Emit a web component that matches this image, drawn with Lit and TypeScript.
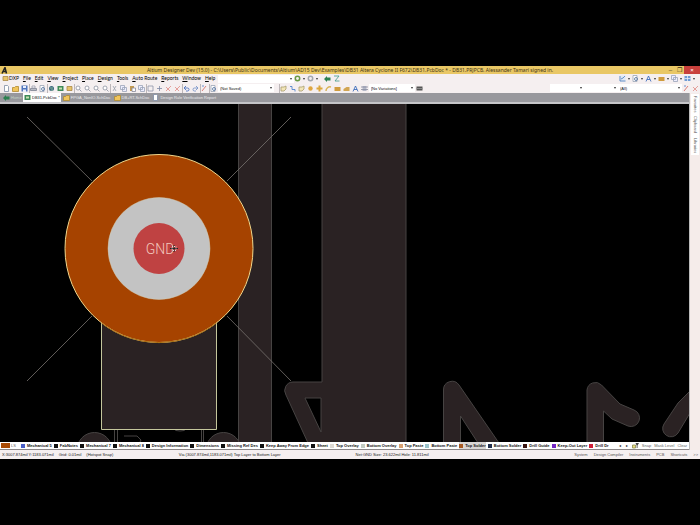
import { LitElement, html, svg, css } from "lit";
import { customElement, property } from "lit/decorators.js";

const glyphs: Record<string, unknown> = {
  page: svg`<path d="M1.500 .5h3l1 1v5h-4z" fill="#fff" stroke="#7d8ba5"/>`,
  folder: svg`<path d="M.5 6.500v-4h2l1-1h3v5z" fill="#f0c45c" stroke="#b08a30"/>`,
  save: svg`<path d="M.5 .5h6v6h-6z" fill="#4f74bd"/><path d="M2 1h3v2H2zM2 4.500h3V7H2z" fill="#e8eefb"/>`,
  print: svg`<path d="M.5 3.500h6v2h-6z" fill="#b9bcc6" stroke="#7c8290"/><path d="M2 1h3v2H2z" fill="#fff" stroke="#99a"/>`,
  find: svg`<path d="M1 .5h4v6H1z" fill="#fff" stroke="#9aa4b5"/><circle cx="4" cy="4" r="1.500" fill="none" stroke="#4a6b9b"/>`,
  globe: svg`<circle cx="3.500" cy="3.500" r="2.500" fill="#3d6780"/><path d="M2 3h3M3 5h2" stroke="#9fd0a0"/>`,
  board: svg`<path d="M.5 1h6v5h-6z" fill="#3e8a58"/><path d="M2 2.500h3v2H2z" fill="#c8e0b0"/>`,
  box: svg`<path d="M1 1.500h5v4H1z" fill="#e8c46a" stroke="#aa8844"/>`,
  zoom: svg`<circle cx="3" cy="3" r="2" fill="#fff" stroke="#8b90a0"/><path d="M4.500 4.500L6.500 6.500" stroke="#8b90a0"/>`,
  cut: svg`<path d="M2 1l3 5M5 1L2 6" stroke="#999fab"/>`,
  copy: svg`<path d="M.5 .5h4v4h-4zM2.500 2.500h4v4h-4z" fill="#eef" stroke="#9aa3b8"/>`,
  paste: svg`<path d="M1 1h4v5H1z" fill="#c39a50"/><path d="M3 3h3.500v3.500H3z" fill="#fff" stroke="#889"/>`,
  area: svg`<path d="M1 1h5v5H1z" fill="none" stroke="#8d94a8"/>`,
  move: svg`<path d="M3.500 1v5M1 3.500h5" stroke="#7d88a5"/>`,
  red: svg`<path d="M1 6L6 1M1 2l4 4" stroke="#e08a84"/>`,
  undo: svg`<path d="M1.500 3h3a1.500 1.500 0 0 1 0 3H3M3 1L1 3l2 2" fill="none" stroke="#3b67bd"/>`,
  redo: svg`<path d="M5.500 3h-3a1.500 1.500 0 0 0 0 3H4M4 1l2 2-2 2" fill="none" stroke="#6b8ac4"/>`,
  pen: svg`<path d="M1 6l4-5" stroke="#d0625c"/><path d="M1 1h2" stroke="#4a78c8"/>`,
  blue: svg`<path d="M1 1.500h2v3h3v2" fill="none" stroke="#3f78c9"/>`,
  route: svg`<path d="M1 6V2h3l2-1v3L4 6z" fill="#f3e6b8" stroke="#a8a070"/>`,
  dot: svg`<circle cx="3.500" cy="3.500" r="2.200" fill="#dfa640"/>`,
  star: svg`<path d="M3.500 .5v6M.5 3.500h6" stroke="#dba63c" stroke-width="2"/>`,
  arc: svg`<path d="M1 6a4 4 0 0 1 5-4" fill="none" stroke="#d8b45c" stroke-width="1.500"/>`,
  fill: svg`<path d="M.5 2h6v4h-6z" fill="#d09c3e"/>`,
  poly: svg`<path d="M.5 6V4l3-2h3v4z" fill="#d2a552"/>`,
  letter: svg`<path d="M1 6.500L3.500 1 6 6.500M2 4.500h3" fill="none" stroke="#2d62b8"/>`,
  part: svg`<path d="M1.500 1h4v5h-4z" fill="#b5b8c8"/><path d="M0 2h7M0 4.500h7" stroke="#888ca0"/>`,
  chart: svg`<path d="M.5 .5h6v6h-6z" fill="#dfe9f7"/><path d="M1 1v5h5.500M2 4l2-1 2-2" fill="none" stroke="#4778ba"/>`,
  cells: svg`<path d="M.5 1h6v5h-6z" fill="#6f9bd4"/><path d="M.5 3.500h6M3.500 1v5" stroke="#e6eefa"/>`,
  chip: svg`<path d="M.5 1.500h6v4h-6z" fill="#555"/><path d="M0 3.500h7" stroke="#999"/>`,
  back: svg`<circle cx="3.500" cy="3.500" r="2.200" fill="none" stroke="#6a9a45" stroke-width="1.500"/>`,
  fwd: svg`<circle cx="3.500" cy="3.500" r="2.200" fill="none" stroke="#a3a8ae" stroke-width="1.500"/>`,
  home: svg`<path d="M0 4l3-3v1.500h3.500v3H3V7z" fill="#2c8050"/>`,
  graph: svg`<path d="M1 1h5L2 6h4.500" fill="none" stroke="#3f9a88"/>`,
  cfg: svg`<path d="M.5 3h3v3h-3z" fill="#e8dd80" stroke="#8a8a50"/><path d="M3.500 1h3.500L5.500 3.500V6h-.8V3.500z" fill="#444"/>`,
};

@customElement("tool-icon")
class ToolIcon extends LitElement {
  @property() name = "page";
  static styles = css`
    :host { display: block; width: 7px; height: 7px; flex: none; }
    svg { display: block; width: 7px; height: 7px; }
  `;
  render() {
    return html`<svg viewBox="0 0 7 7" aria-hidden="true" stroke-width=".8">${glyphs[this.name]}</svg>`;
  }
}

@customElement("app-root")
class AppRoot extends LitElement {
  static styles = css`
    :host {
      display: flex; flex-direction: column; box-sizing: border-box; min-height: 100vh;
      padding: 66px 0; background: #000; color: #111;
      font: 4px/8px "Liberation Sans", sans-serif;
    }
    button, select { font: inherit; color: inherit; background: none; border: 0; padding: 0; margin: 0; }
    .title { display: flex; align-items: center; height: 8px; background: #e9c765; color: #3f3415; }
    .title h1 { flex: 1; margin: 0; text-align: center; white-space: nowrap; font: 5px/8px "Noto Sans", sans-serif; }
    .app { width: 34px; }
    .logo { display: block; width: 9px; height: 7px; }
    .win { display: flex; }
    .win button { width: 9px; height: 8px; font-size: 6px; line-height: 7px; }
    .win .close { width: 16px; background: #c8403c; color: #fff; }
    .bar { display: flex; align-items: center; background: #f5eff0; white-space: nowrap; }
    .menubar { height: 9px; }
    .menu { display: flex; align-items: center; gap: 4px; padding-left: 2px; width: 218px; box-sizing: border-box; font: 5px/9px Lato, sans-serif; color: #000; }
    .menu button::first-letter { text-decoration: underline; }
    .menu .brand { display: flex; align-items: center; }
    .tools { height: 10px; }
    .set { display: flex; align-items: center; }
    .set button { display: block; width: 9px; padding: 1px; box-sizing: border-box; }
    .set .cut { border-left: 1px solid #bcb6b8; padding-left: 0; }
    .lead { padding-left: 2px; }
    .drops { display: flex; padding-right: 4px; gap: 1px; }
    .drops button { display: flex; align-items: center; gap: 2px; width: 12px; padding: 1px 0; }
    .caret { width: 0; height: 0; border: 1px solid transparent; border-top: 2px solid #333; border-bottom: 0; flex: none; }
    .push { margin-left: auto; }
    .combo { display: flex; align-items: center; background: #fff; height: 8px; padding: 0 2px; box-sizing: border-box; }
    .combo select { flex: 1; min-width: 0; width: 100%; appearance: none; outline: 0; line-height: 7px; }
    .wide { width: 76px; }
    .mid { width: 56px; }
    .short { width: 46px; }
    .long { width: 64px; }
    .small { width: 34px; }
    .gap { margin-left: 5px; }
    .body { flex: 1; display: flex; min-height: 0; }
    .doc { flex: 1; min-width: 0; display: flex; flex-direction: column; }
    .tabs { display: flex; align-items: stretch; gap: 1px; height: 9px; padding-left: 2px; background: #98989d; border-bottom: 2px solid #c5c5c8; color: #ececee; line-height: 9px; }
    .tabs button { display: flex; align-items: center; gap: 1px; padding: 0 1px; white-space: nowrap; }
    .tabs .on { background: #fff; color: #111; }
    .tabs .start { color: #c2d0c4; width: 20px; }
    .canvas { flex: 1; min-height: 0; position: relative; background: #000; }
    .canvas svg { display: block; position: absolute; inset: 0; width: 100%; height: 100%; }
    .net { font: 300 14px Roboto, sans-serif; fill: #f3c9bd; text-anchor: middle; }
    .layers { display: flex; align-items: center; height: 7px; background: #fff; border-bottom: 1px solid #8c8788; overflow: hidden; }
    .current { width: 9px; height: 5px; margin: 0 1px; background: #a84a04; flex: none; }
    .list { display: flex; flex: 1; min-width: 0; overflow: hidden; gap: 2px; margin-left: 5px; }
    .list button { display: flex; align-items: center; gap: 2px; flex: none; white-space: nowrap; font-weight: bold; line-height: 7px; }
    .list .on { background: #d9d6d4; }
    .chip { width: 4px; height: 4px; flex: none; }
    .ends { display: flex; align-items: center; gap: 3px; padding: 0 2px; flex: none; }
    .step { width: 4px; }
    .dim { color: #666; }
    .side { width: 11px; background: #f5ecea; border-left: 1px solid #bbb; box-sizing: border-box; display: flex; flex-direction: column; }
    .side div { display: flex; flex-direction: column; gap: 4px; margin: 1px 1px 0; padding: 2px 0; background: #fff; }
    .side button { writing-mode: vertical-rl; line-height: 8px; text-align: left; color: #555; }
    .status { display: flex; height: 9px; align-items: center; background: #f5eff0; padding: 0 2px; white-space: nowrap; color: #222; }
    .where { flex: 177; display: flex; gap: 5px; }
    .what { flex: 177; min-width: 0; }
    .info { flex: 219; min-width: 0; }
    .panels { display: flex; gap: 6px; color: #555; }
  `;

  private icons(names: string[], cuts: number[] = []) {
    return names.map((n, i) => html`<button class=${cuts.includes(i) ? "cut" : ""} aria-label=${n}><tool-icon name=${n}></tool-icon></button>`);
  }

  private combo(cls: string, name: string, value = "") {
    return html`<label class="combo ${cls}"><select aria-label=${name}><option>${value}</option></select><span class="caret"></span></label>`;
  }

  private layers: [string, string][] = [
    ["#4a5fc8", "Mechanical 5"], ["#111", "FabNotes"], ["#111", "Mechanical 7"], ["#111", "Mechanical 8"],
    ["#111", "Design Information"], ["#111", "Dimensions"], ["#111", "Missing Ref Des"], ["#111", "Keep Away From Edge"],
    ["#111", "Sheet"], ["#dedad4", "Top Overlay"], ["#c3ccc3", "Bottom Overlay"], ["#d9a273", "Top Paste"],
    ["#9cc4cc", "Bottom Paste"], ["#a85a22", "Top Solder"], ["#24304e", "Bottom Solder"], ["#3a1512", "Drill Guide"],
    ["#7426c4", "Keep-Out Layer"], ["#d01f38", "Drill Dr"],
  ];

  private drawing() {
    return svg`
      <g fill="#2a2223" stroke="#464342" stroke-width="1">
        <path d="M238.500 -1h33v340h-33zM293 278h29v-279h84v340h-98l-22-48a8.500 8.500 0 0 1 7-13z"/>
        <path d="M305 294h16v34z" fill="#000"/>
        <path d="M443.500 339v-53a8.500 8.500 0 0 1 15.500-5l40 58h-21l-17.500-27v27z"/>
        <path d="M587 339v-53a8.500 8.500 0 0 1 14.500-5l18.500 19 14 6a8.500 8.500 0 0 1-6 16l-16-7-8.500-8v32z"/>
        <path d="M690 287l-12 12-14 21a8 8 0 0 0 14 9l12-20z"/>
        <circle cx="94.500" cy="346" r="17.500"/><circle cx="223.500" cy="346" r="17.500"/>
        <path d="M114.500 326v14h3v-14M201.500 326v14h2v-14M124 332h13l4 4-2 4M174 325q1 2 6 2t6-2" fill="none"/>
      </g>
      <path d="M27 13L92 77M291 13l-64 64M27 277l65-65M291 277l-64-65" stroke="#77726f" stroke-width=".8"/>
      <path d="M101.500 180h115v145.500h-115z" fill="#2a2223" stroke="#c4c69c"/>
      <circle cx="159" cy="144.500" r="94" fill="#a64300" stroke="#f0d78c"/>
      <path d="M101.500 219A94 94 0 0 0 216.500 219" fill="none" stroke="#a66a10"/>
      <circle cx="159" cy="144.500" r="51" fill="#c3c3c3" stroke="#d2cdb0" stroke-width=".5"/>
      <circle cx="159" cy="144.500" r="25.500" fill="#bf4242"/>
      <text class="net" x="160" y="150">GND</text>
      <path d="M170 144.500h8M174 141v7" stroke="#222"/><path d="M172 142.500h4v4h-4z" fill="none" stroke="#ddd" stroke-dasharray="1 1"/>`;
  }

  render() {
    return html`
      <header class="title">
        <div class="app"><svg class="logo" viewBox="0 0 9 7" aria-hidden="true"><path d="M2 6.500L5 .5l1.500 6M3.500 4.500h3" fill="none" stroke="#222" stroke-width="1.500"/></svg></div>
        <h1>Altium Designer Dev (15.0) - C:\\Users\\Public\\Documents\\Altium\\AD15 Dev\\Examples\\DB31 Altera Cyclone II F672\\DB31.PcbDoc * - DB31.PRJPCB. Alessander Tamari signed in.</h1>
        <div class="win"><button aria-label="Minimize">–</button><button aria-label="Restore">❐</button><button class="close" aria-label="Close">×</button></div>
      </header>
      <div class="bar menubar">
        <nav class="menu">
          <button class="brand"><tool-icon name="box"></tool-icon>DXP</button>
          ${["File", "Edit", "View", "Project", "Place", "Design", "Tools", "Auto Route", "Reports", "Window", "Help"].map((m) => html`<button>${m}</button>`)}
        </nav>
        ${this.combo("wide", "Address")}
        <div class="drops">
          <button aria-label="Back"><tool-icon name="back"></tool-icon><span class="caret"></span></button>
          <button aria-label="Forward"><tool-icon name="fwd"></tool-icon><span class="caret"></span></button>
        </div>
        <div class="set">${this.icons(["home", "graph"])}</div>
        <div class="drops push">
          ${["chart", "find", "letter", "fill", "copy", "cells"].map((n) => html`<button aria-label=${n}><tool-icon name=${n}></tool-icon><span class="caret"></span></button>`)}
        </div>
      </div>
      <div class="bar tools">
        <div class="set lead">${this.icons(["page", "folder", "save", "print", "find", "globe", "board", "box", "zoom", "zoom", "zoom", "zoom", "cut", "copy", "paste", "copy", "area", "move", "red", "red", "undo", "redo", "pen", "find"], [3, 5, 8, 12, 16, 20, 22, 23])}</div>
        ${this.combo("mid", "View", "(Not Saved)")}
        <div class="set gap">${this.icons(["route", "blue", "route", "dot", "star", "arc", "fill", "poly", "letter", "part"], [0])}</div>
        ${this.combo("short", "Variations", "[No Variations]")}
        <div class="set">${this.icons(["chip"])}</div>
        ${this.combo("small push", "Filter")}
        ${this.combo("small", "Mask")}
        ${this.combo("long", "Scope", "(All)")}
        <div class="set">${this.icons(["pen", "red"])}</div>
      </div>
      <main class="body">
        <div class="doc">
          <div class="tabs">
            <button class="start"><tool-icon name="home"></tool-icon>Home</button>
            <button class="on"><tool-icon name="board"></tool-icon>DB31.PcbDoc *</button>
            <button><tool-icon name="folder"></tool-icon>FPGA_NonIO.SchDoc</button>
            <button><tool-icon name="folder"></tool-icon>DB+RT.SchDoc</button>
            <button><tool-icon name="page"></tool-icon>Design Rule Verification Report</button>
          </div>
          <div class="canvas"><svg viewBox="0 0 689 338" preserveAspectRatio="xMinYMin slice">${this.drawing()}</svg></div>
          <div class="layers">
            <span class="current"></span><span class="dim">LS</span>
            <div class="list">${this.layers.map(([c, n]) => html`<button class=${n === "Top Solder" ? "on" : ""}><span class="chip" style="background:${c}"></span>${n}</button>`)}</div>
            <div class="ends"><button class="step" aria-label="Previous">◂</button><button class="step" aria-label="Next">▸</button><tool-icon name="cfg"></tool-icon>
              <button class="dim">Snap</button><button class="dim">Mask Level</button><button class="dim">Clear</button></div>
          </div>
        </div>
        <aside class="side"><div><button>Favorites</button><button>Clipboard</button><button>Libraries</button></div></aside>
      </main>
      <footer class="status">
        <div class="where"><span>X:3007.874mil Y:1183.071mil</span><span>Grid: 0.01mil</span><span>(Hotspot Snap)</span></div>
        <div class="what">Via (3007.874mil,1183.071mil) Top Layer to Bottom Layer</div>
        <div class="info">Net:GND Size: 23.622mil Hole: 11.811mil</div>
        <div class="panels"><button>System</button><button>Design Compiler</button><button>Instruments</button><button>PCB</button><button>Shortcuts</button><button>&gt;&gt;</button></div>
      </footer>`;
  }
}
